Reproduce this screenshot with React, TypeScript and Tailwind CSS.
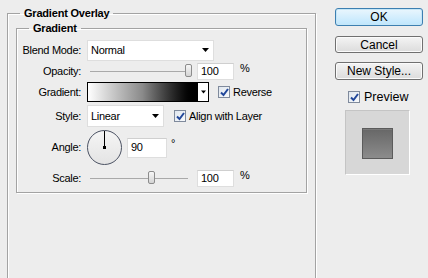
import React from 'react';

const Arrow: React.FC<{ className?: string }> = ({ className }) => (
  <svg width="7" height="4" viewBox="0 0 7 4" className={className}>
    <path d="M0 0H7L3.5 4Z" fill="#000" />
  </svg>
);

const Check: React.FC = () => (
  <span className="w-[12px] h-[12px] border border-[#7f8a9c] bg-gradient-to-br from-[#dfe6ee] to-[#f8fafc] flex items-center justify-center">
    <svg width="9" height="9" viewBox="0 0 9 9">
      <path d="M1 4.5L3.5 7L8 1" stroke="#21479a" strokeWidth="2" fill="none" />
    </svg>
  </span>
);

const Field: React.FC<{ value: string; w: string; h: string }> = ({ value, w, h }) => (
  <div className={`${w} ${h} bg-white border border-[#dedede] border-t-[#cfcfcf] flex items-center pl-[3px]`}>
    {value}
  </div>
);

const Slider: React.FC<{ pos: number }> = ({ pos }) => (
  <div className="w-[106px] h-[18px] flex items-center">
    <div className="relative ml-[3px] w-[98px] h-[1px] bg-[#a9a9a9]">
      <div
        className="absolute top-[-7px] w-[7px] h-[13px] rounded-[2px] border border-[#8c8c8c] bg-gradient-to-b from-[#f7f7f7] to-[#d4d4d4]"
        style={{ left: pos - 3 }}
      />
    </div>
  </div>
);

const Row: React.FC<{ label: string; h: string; mt?: string; children: React.ReactNode }> = ({ label, h, mt = '', children }) => (
  <div className={`flex items-center ${h} ${mt}`}>
    <span className="w-[64px] text-right">{label}</span>
    <div className="ml-[6px] flex items-center">{children}</div>
  </div>
);

const Button: React.FC<{ label: string; primary?: boolean; h: string; mt?: string }> = ({ label, primary, h, mt = '' }) => (
  <div
    className={`w-[88px] ${h} ${mt} rounded-[3px] border flex items-center justify-center text-[12px] ${
      primary
        ? 'border-[#3c7fb1] bg-gradient-to-b from-[#eaf6fd] to-[#bee6fd] shadow-[inset_0_0_0_1px_#c5e6f7]'
        : 'border-[#707070] bg-gradient-to-b from-[#f4f4f4] to-[#dcdcdc] shadow-[inset_0_0_0_1px_#fbfbfb]'
    }`}
  >
    {label}
  </div>
);

export default function App() {
  return (
    <div
      className="w-[428px] h-[278px] overflow-hidden bg-[#ededed] flex text-[11px] tracking-[-0.3px] text-black"
      style={{ fontFamily: '"Liberation Sans", Arial, sans-serif' }}
    >
      {/* left: effect settings */}
      <div className="w-[316px] shrink-0 pl-[7px] pt-[6px]">
        <fieldset className="w-[309px] h-[300px] border border-[#a3a3a3] shadow-[1px_1px_0_#fff,inset_1px_1px_0_#fff]">
          <legend className="ml-[12px] px-[4px] font-bold leading-[14px] tracking-[-0.2px]">Gradient Overlay</legend>
          <fieldset className="ml-[8px] mt-[1px] w-[291px] h-[172px] border border-[#a3a3a3] shadow-[1px_1px_0_#fff,inset_1px_1px_0_#fff] pt-[4px]">
            <legend className="ml-[12px] px-[4px] font-bold leading-[14px] tracking-[-0.2px]">Gradient</legend>

            <Row label="Blend Mode:" h="h-[22px]">
              <div className="w-[127px] h-[21px] bg-white border border-[#dedede] flex items-center justify-between pl-[3px] pr-[4px]">
                <span>Normal</span>
                <Arrow />
              </div>
            </Row>

            <Row label="Opacity:" h="h-[18px]" mt="mt-[1px]">
              <Slider pos={98} />
              <div className="ml-[4px]">
                <Field value="100" w="w-[37px]" h="h-[17px]" />
              </div>
              <span className="ml-[6px] -mt-[5px]">%</span>
            </Row>

            <Row label="Gradient:" h="h-[20px]" mt="mt-[2px]">
              <div className="w-[122px] h-[20px] border border-black bg-white flex">
                <div className="flex-1 bg-gradient-to-r from-white via-[#8a8a8a] to-black" />
                <div className="w-[11px] border-l border-black flex items-center justify-center">
                  <Arrow className="w-[5px]" />
                </div>
              </div>
              <div className="ml-[9px]">
                <Check />
              </div>
              <span className="ml-[3px]">Reverse</span>
            </Row>

            <Row label="Style:" h="h-[22px]" mt="mt-[3px]">
              <div className="w-[77px] h-[22px] bg-white border border-[#dedede] flex items-center justify-between pl-[3px] pr-[4px]">
                <span>Linear</span>
                <Arrow />
              </div>
              <div className="ml-[10px]">
                <Check />
              </div>
              <span className="ml-[3px]">Align with Layer</span>
            </Row>

            <Row label="Angle:" h="h-[37px]" mt="mt-[2px]">
              <div className="relative w-[35px] h-[35px] rounded-full border-[1.5px] border-[#4b5263] bg-gradient-to-b from-[#f5f5f5] to-[#e4e4e4]">
                <div className="absolute left-[15.5px] top-0 w-[1.5px] h-[16px] bg-black" />
                <div className="absolute left-[14.5px] top-[15px] w-[3px] h-[3px] bg-black" />
              </div>
              <div className="ml-[5px]">
                <Field value="90" w="w-[40px]" h="h-[20px]" />
              </div>
              <span className="ml-[4px] -mt-[8px]">°</span>
            </Row>

            <Row label="Scale:" h="h-[18px]" mt="mt-[3px]">
              <Slider pos={61} />
              <div className="ml-[4px]">
                <Field value="100" w="w-[37px]" h="h-[17px]" />
              </div>
              <span className="ml-[6px] -mt-[5px]">%</span>
            </Row>
          </fieldset>
        </fieldset>
      </div>

      {/* right: buttons and preview */}
      <div className="flex flex-col pl-[19px] pt-[8px] tracking-normal">
        <Button label="OK" primary h="h-[18px]" />
        <Button label="Cancel" h="h-[17px]" mt="mt-[10px]" />
        <Button label="New Style..." h="h-[18px]" mt="mt-[9px]" />
        <div className="flex items-center mt-[11px] ml-[13px] h-[12px]">
          <Check />
          <span className="ml-[4px] text-[12.5px]">Preview</span>
        </div>
        <div className="mt-[7px] ml-[10px] w-[65px] h-[65px] bg-[#d7d7d7] border border-[#c4c4c4] border-r-white border-b-white pl-[16px] pt-[17px]">
          <div className="w-[31px] h-[31px] border border-[#5b5b5b] bg-gradient-to-b from-[#676767] to-[#8c8c8c] shadow-[inset_0_1px_0_#7a7a7a]" />
        </div>
      </div>
    </div>
  );
}
